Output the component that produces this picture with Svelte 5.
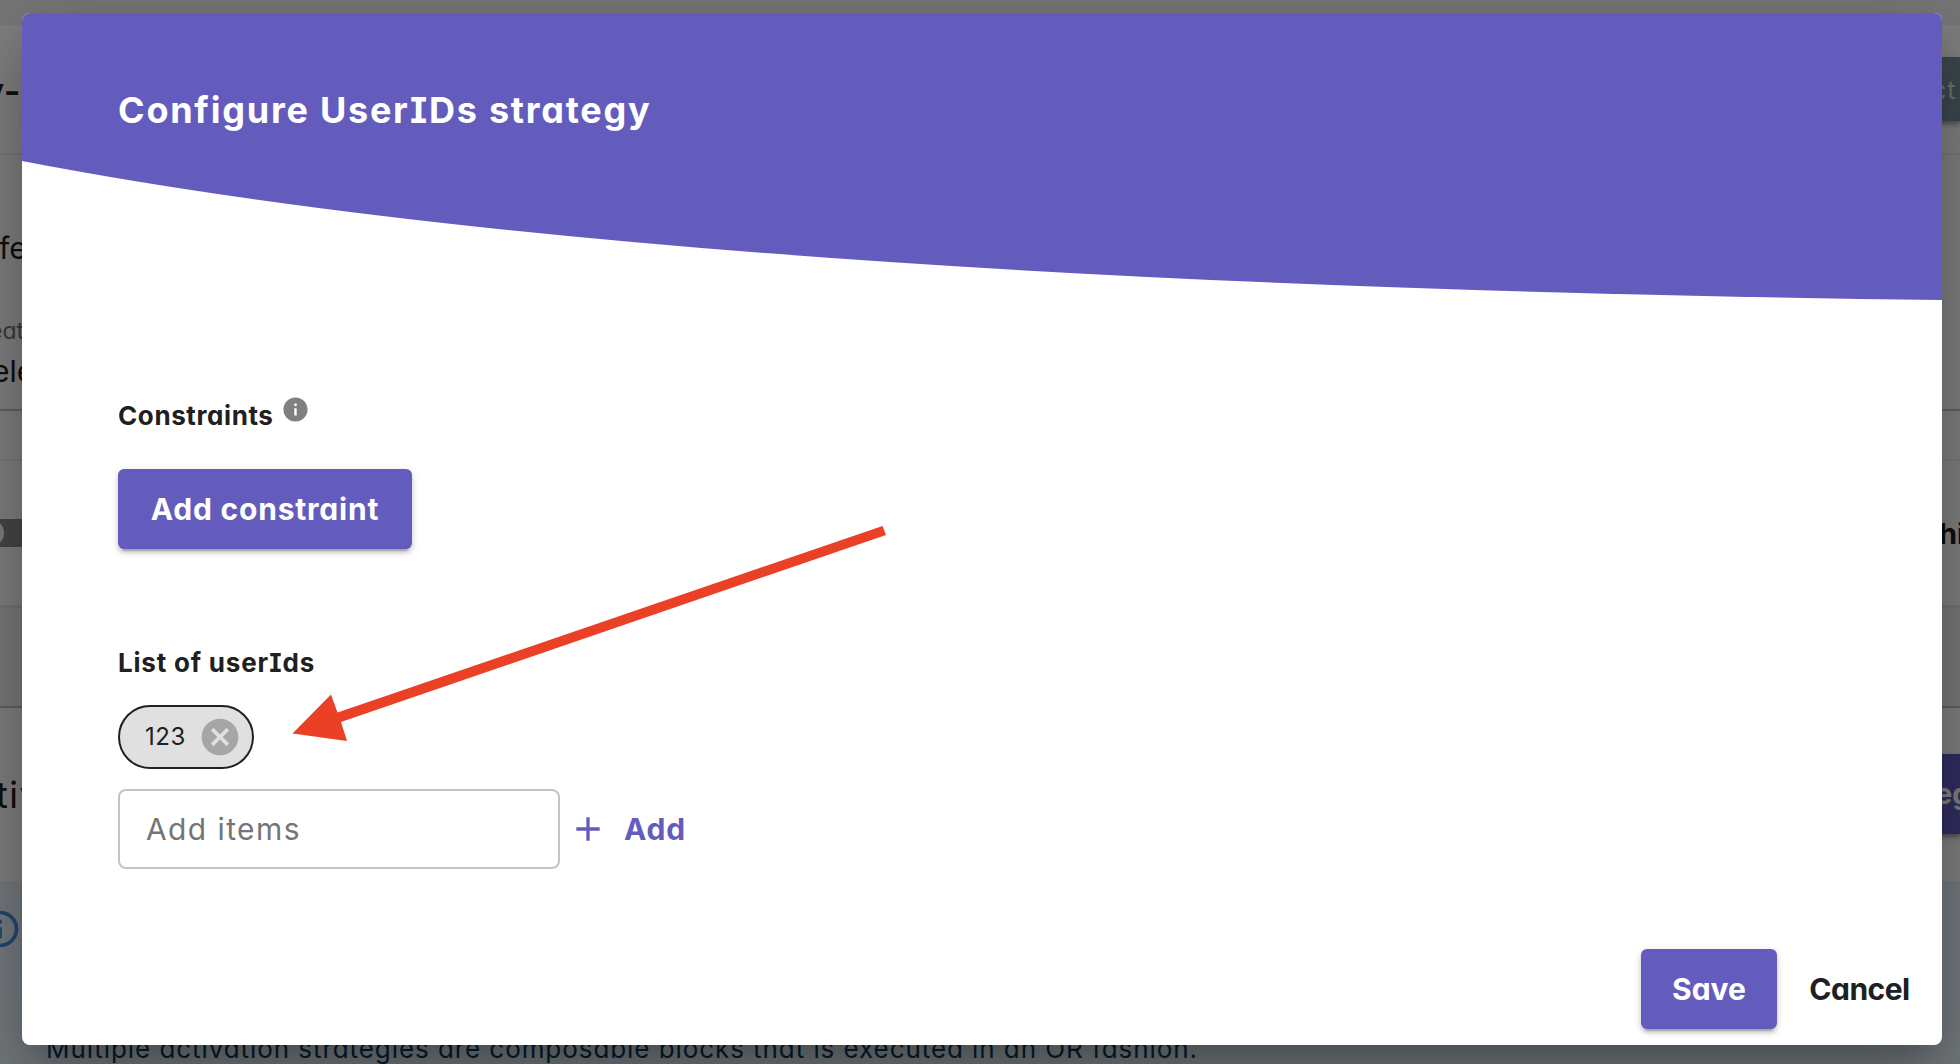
<script>
  let items = $state(['123']);
  let draft = $state('');

  function add() {
    const value = draft.trim();
    if (value) items.push(value);
    draft = '';
  }
</script>

<div class="screen">
  <div class="page" aria-hidden="true">
    <div class="topbar"></div>
    <div class="row heading"><span class="t-name">y-</span><span class="archive">ct</span></div>
    <div class="row desc"><span class="t-desc">fe</span></div>
    <div class="row field">
      <span class="t-label">eat</span>
      <span class="t-value">ele</span>
    </div>
    <div class="row gap"></div>
    <div class="row env"><span class="toggle"><i></i></span><span class="t-right">hi</span></div>
    <div class="row tabs"></div>
    <div class="row act"><span class="t-act">tiv</span><span class="strategy">eg</span></div>
    <div class="row alert">
      <svg class="alert-icon" viewBox="0 0 24 24"><path d="M11,9H13V7H11M12,20C7.59,20 4,16.41 4,12C4,7.59 7.59,4 12,4C16.41,4 20,7.59 20,12C20,16.41 16.41,20 12,20M12,2A10,10 0 0,0 2,12A10,10 0 0,0 12,22A10,10 0 0,0 22,12A10,10 0 0,0 12,2M11,17H13V11H11V17Z" /></svg>
      <span class="t-alert">Multiple activation strategies are composable blocks that is executed in an OR fashion.</span>
    </div>
  </div>

  <div class="backdrop">
    <div class="dialog" role="dialog" aria-label="Configure UserIDs strategy">
      <header>
        <svg class="wave" viewBox="0 0 1920 288" preserveAspectRatio="none"><path d="M0 0H1920V287Q638 271 0 148Z" /></svg>
        <h1>Configure UserIDs strategy</h1>
      </header>
      <section class="content">
        <div class="label">
          <h2 class="l-con">Constraints</h2>
          <svg class="info" viewBox="0 0 24 24"><path d="M12 2C6.48 2 2 6.48 2 12s4.48 10 10 10 10-4.48 10-10S17.52 2 12 2zm1 15h-2v-6h2v6zm0-8h-2V7h2v2z" /></svg>
        </div>
        <button class="btn primary constraint">Add constraint</button>
        <h2 class="l-list">List of userIds</h2>
        <div class="chips">
          {#each items as item, i}
            <span class="chip">
              <span class="num">{item}</span>
              <button class="del" aria-label="Remove" onclick={() => items.splice(i, 1)}>
                <svg viewBox="0 0 24 24"><path d="M12 2C6.47 2 2 6.47 2 12s4.47 10 10 10 10-4.47 10-10S17.53 2 12 2zm5 13.59L15.59 17 12 13.41 8.41 17 7 15.59 10.59 12 7 8.41 8.41 7 12 10.59 15.59 7 17 8.41 13.41 12 17 15.59z" /></svg>
              </button>
            </span>
          {/each}
        </div>
        <div class="entry">
          <input placeholder="Add items" bind:value={draft} />
          <button class="btn text add" onclick={add}>
            <svg viewBox="0 0 24 24"><path d="M19 13h-6v6h-2v-6H5v-2h6V5h2v6h6v2z" /></svg>
            <span>Add</span>
          </button>
        </div>
      </section>
      <footer>
        <button class="btn primary save">Save</button>
        <button class="btn text cancel">Cancel</button>
      </footer>
    </div>
  </div>

  <svg class="arrow" viewBox="0 0 600 220"><path d="M2.500 213.500L41 174.500L47.500 192.500L592.500 6L596 15L51 202L57 221Z" /></svg>
</div>

<style>
  :global(body) { overflow: hidden; }
  .screen, .screen * { box-sizing: border-box; }
  .screen {
    position: relative;
    width: 1960px;
    height: 1064px;
    overflow: hidden;
    font-family: Inter, Lato, sans-serif;
    font-feature-settings: 'cv11' 1, 'cv08' 1;
    color: #202021;
  }
  button { border: 0; padding: 0; background: none; font: inherit; color: inherit; letter-spacing: inherit; font-feature-settings: inherit; }
  h1, h2 { margin: 0; white-space: nowrap; }

  .page { display: flex; flex-direction: column; height: 1064px; background: #fff; white-space: nowrap; }
  .topbar { height: 25px; background: #efefef; }
  .row { display: flex; justify-content: space-between; overflow: hidden; flex: none; }
  .heading { height: 130px; border-bottom: 2px solid #f0f0f0; }
  .t-name { font-size: 36px; font-weight: 600; line-height: 44px; margin: 44px 0 0 -17px; letter-spacing: 1px; }
  .archive { width: 98px; height: 64px; margin-top: 32px; padding-left: 70px; background: #78909c; color: #e0e0e0; font-size: 25px; line-height: 66px; letter-spacing: 1px; box-shadow: 0 3px 5px rgba(0, 0, 0, .4); overflow: hidden; }
  .desc { height: 154px; }
  .t-desc { font-size: 30px; line-height: 36px; margin: 75px 0 0 -1px; }
  .field { height: 102px; flex-direction: column; justify-content: flex-start; border-bottom: 2px solid #c4c4c4; }
  .t-label { font-size: 23px; line-height: 28px; color: #757575; margin: 8px 0 0 -11px; }
  .t-value { font-size: 30px; line-height: 36px; margin: 8px 0 0 -8px; }
  .gap { height: 50px; border-bottom: 2px solid #f0f0f0; }
  .env { height: 144px; }
  .toggle { display: flex; align-items: center; width: 60px; height: 28px; margin-top: 58px; background: #8c8c8c; }
  .toggle i { width: 28px; height: 28px; margin-left: -24px; border-radius: 50%; background: #fafafa; }
  .t-right { width: 21px; font-size: 29px; font-weight: 700; line-height: 36px; margin-top: 55px; }
  .tabs { height: 103px; background: #f4f4f4; border-top: 3px solid #ebebeb; border-bottom: 2px solid #c0c0c0; }
  .act { height: 173px; }
  .t-act { font-size: 36px; line-height: 44px; margin: 65px 0 0 -4px; letter-spacing: 1.5px; }
  .strategy { width: 100px; height: 80px; margin-top: 46px; padding-left: 75px; background: #635dc5; color: #fff; font-size: 29px; font-weight: 700; line-height: 80px; box-shadow: 0 3px 5px rgba(0, 0, 0, .4); }
  .alert { height: 183px; background: #e8f4fd; color: #0d3c61; flex-direction: column; justify-content: flex-start; }
  .alert-icon { width: 44px; height: 44px; margin: 26px 0 0 -22px; flex: none; fill: #4690dd; }
  .t-alert { margin: 82px 0 0 46px; font-size: 26px; line-height: 32px; letter-spacing: .93px; }

  .backdrop { position: absolute; inset: 0; display: flex; padding: 13px 18px 19px 22px; background: rgba(0, 0, 0, .5); }
  .dialog {
    display: flex; flex-direction: column; width: 1920px; height: 1032px; border-radius: 8px; overflow: hidden; background: #fff;
    box-shadow: 0 22px 30px -14px rgba(0, 0, 0, .2), 0 48px 76px 6px rgba(0, 0, 0, .14), 0 18px 92px 16px rgba(0, 0, 0, .12);
  }
  header { display: grid; height: 288px; flex: none; }
  .wave { grid-area: 1 / 1; width: 1920px; height: 288px; fill: #645cbd; }
  h1 { grid-area: 1 / 1; padding: 75px 0 0 96px; font-size: 36px; line-height: 44px; font-weight: 700; letter-spacing: 1.75px; color: #fff; z-index: 1; }
  .content { display: flex; flex-direction: column; align-items: flex-start; padding: 97px 96px 0; }
  h2 { font-size: 26px; line-height: 36px; font-weight: 700; }
  .label { display: flex; height: 36px; }
  .l-con { width: 163px; letter-spacing: .6px; }
  .info { width: 29px; height: 29px; margin-top: -3px; fill: #808080; }
  .btn { display: flex; align-items: center; justify-content: center; height: 80px; font-size: 30px; line-height: 80px; font-weight: 700; border-radius: 8px; white-space: nowrap; }
  .primary { background: #645cbd; color: #fff; border-radius: 6px; box-shadow: 0 6px 2px -4px rgba(0, 0, 0, .2), 0 4px 4px rgba(0, 0, 0, .14), 0 2px 10px rgba(0, 0, 0, .12); }
  .constraint { width: 294px; margin-top: 35px; letter-spacing: .8px; }
  .save { letter-spacing: 0; }
  .l-list { margin-top: 96px; letter-spacing: .8px; }
  .chips { display: flex; gap: 12px; margin-top: 24px; height: 64px; }
  .chip { display: flex; align-items: center; width: 136px; border: 2px solid #202021; border-radius: 32px; background: #e0e0e0; padding-left: 25px; }
  .num { width: 53px; font-size: 24px; line-height: 32px; letter-spacing: .6px; }
  .del { display: flex; }
  .del svg { width: 44px; height: 44px; fill: #a6a6a6; }
  .entry { display: flex; margin-top: 20px; }
  input { width: 442px; height: 80px; padding: 0 26px; border: 2px solid #c4c4c4; border-radius: 8px; font: 400 30px Inter, Lato, sans-serif; font-feature-settings: inherit; letter-spacing: 1.4px; background: #fff; outline: 0; }
  input::placeholder { color: #757575; opacity: 1; }
  .text { letter-spacing: .8px; }
  .add { color: #645cbd; margin-left: 8px; }
  .add svg { width: 40px; height: 40px; fill: #645cbd; margin-right: 16px; }
  footer { display: flex; justify-content: flex-end; margin-top: auto; padding: 0 32px 16px 0; }
  .save { width: 136px; }
  .cancel { width: 101px; margin-left: 32px; letter-spacing: -.5px; }
  .arrow { position: absolute; left: 290px; top: 520px; width: 600px; height: 220px; fill: #ea4126; overflow: visible; }
</style>
